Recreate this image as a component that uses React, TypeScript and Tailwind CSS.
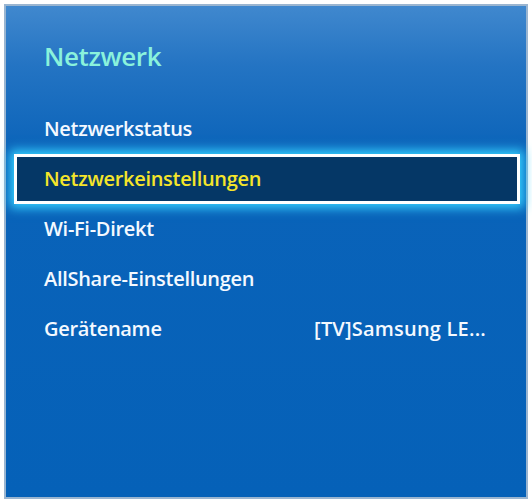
import React from "react";

const items = [
  { label: "Netzwerkstatus" },
  { label: "Netzwerkeinstellungen", selected: true },
  { label: "Wi-Fi-Direkt" },
  { label: "AllShare-Einstellungen" },
  { label: "Gerätename", value: "[TV]Samsung LE..." },
];

export default function App() {
  return (
    <div className="w-[532px] h-[501px] bg-white pl-[4px] pt-[4px]" style={{ fontFamily: '"Open Sans", "Noto Sans", sans-serif' }}>
      <div className="w-[524px] h-[495px] border-2 border-[#9ab5d0] bg-[linear-gradient(180deg,#4088ce_0%,#2474c3_12%,#0a63b9_30%,#0561b8_100%)] flex flex-col">
        <div className="pl-[38px] pt-[32px] h-[98px] text-[26px] font-semibold text-[#8af2dc] leading-[36px] tracking-[-0.4px]">
          Netzwerk
        </div>
        <div className="flex flex-col pl-[8px] pr-[6px]">
          {items.map((it) =>
            it.selected ? (
              <div
                key={it.label}
                className="h-[50px] border-[3px] border-white bg-[#053766] shadow-[0_0_10px_4px_#36d0ff] flex items-center pl-[27px] text-[20px] font-semibold text-[#f5e52a] tracking-[-0.3px]"
              >
                {it.label}
              </div>
            ) : (
              <div
                key={it.label}
                className="h-[50px] flex items-center justify-between pl-[30px] pr-[34px] text-[20px] font-semibold text-[#f4f9ff] tracking-[-0.3px]"
              >
                <span>{it.label}</span>
                {it.value && <span className="tracking-[0.2px]">{it.value}</span>}
              </div>
            )
          )}
        </div>
      </div>
    </div>
  );
}
